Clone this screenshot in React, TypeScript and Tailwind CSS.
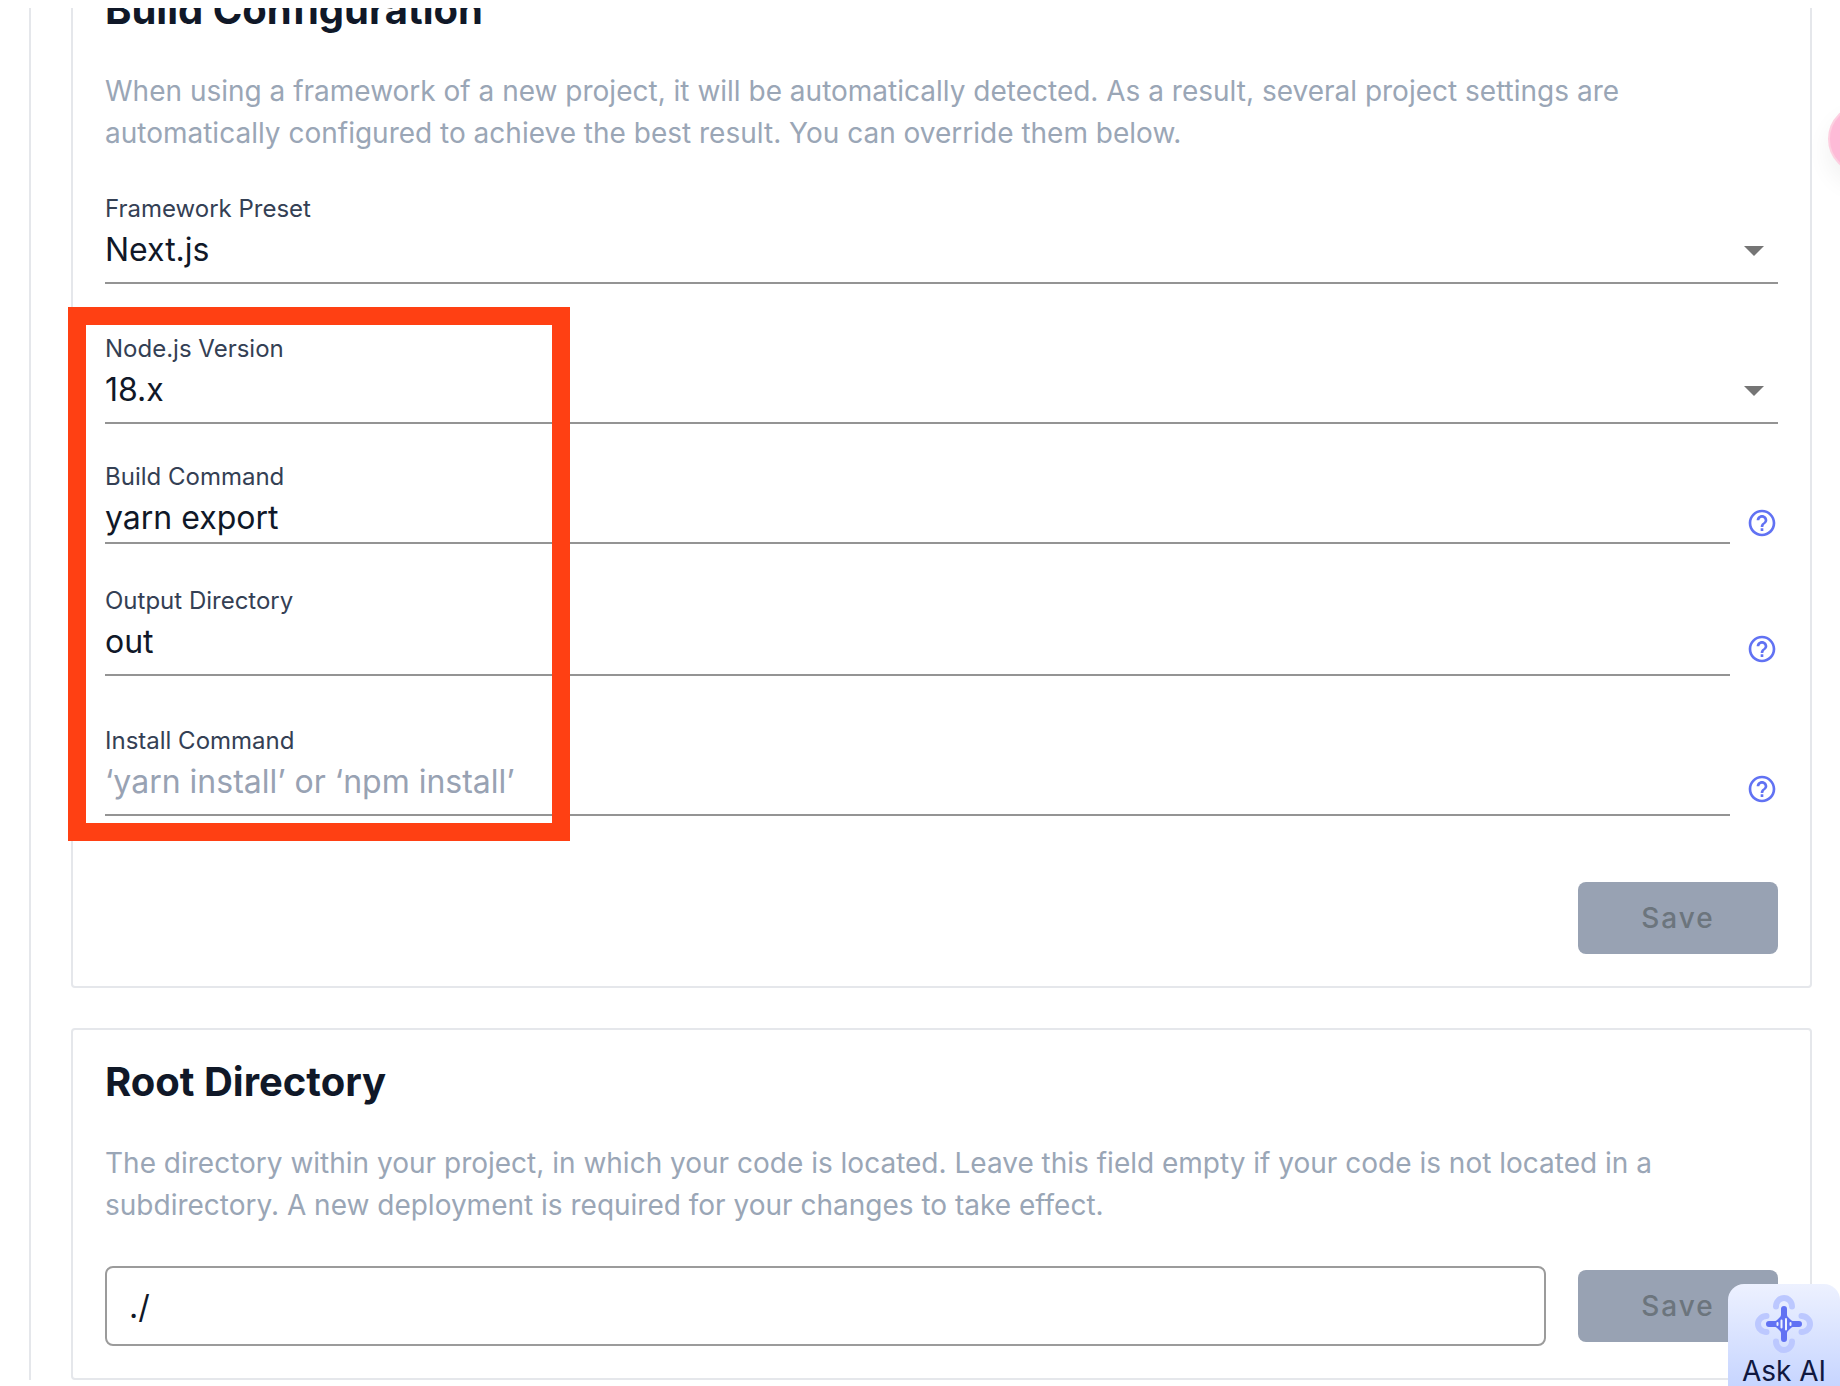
import { useId } from "react";
import type { ReactNode } from "react";
import { MdArrowDropDown, MdHelpOutline } from "react-icons/md";

const font = "font-['Inter',sans-serif]";
const labelClass = "block text-2xl leading-[34px] text-[#344054]";
const controlClass =
  "w-full appearance-none bg-transparent p-0 text-[32px] text-[#101828] outline-none placeholder:text-[#98a2b3] placeholder:opacity-100";

function Card({ title, text, children, className = "" }: { title: string; text: string; children: ReactNode; className?: string }) {
  return (
    <section className={`rounded border-2 border-[#e5e7eb] p-8 ${className}`}>
      <h2 className="text-[40px] leading-10 font-bold text-[#101828]">{title}</h2>
      <p className="mt-10 text-[28px] leading-[42px] text-[#9aa6b6]">{text}</p>
      {children}
    </section>
  );
}

function SelectField({ label, value }: { label: string; value: string }) {
  const id = useId();
  return (
    <div>
      <label htmlFor={id} className={labelClass}>{label}</label>
      <div className="relative border-b-2 border-[#949494] pb-2">
        <select id={id} defaultValue={value} className={`${controlClass} block h-12`}>
          <option>{value}</option>
        </select>
        <MdArrowDropDown className="pointer-events-none absolute top-0 right-0 size-12 text-[#757575]" />
      </div>
    </div>
  );
}

function TextField({ label, value, placeholder, dense }: { label: string; value?: string; placeholder?: string; dense?: boolean }) {
  const id = useId();
  return (
    <div className="flex items-end gap-4">
      <div className="grow">
        <label htmlFor={id} className={labelClass}>{label}</label>
        <div className={dense ? "border-b-2 border-[#949494]" : "border-b-2 border-[#949494] pb-2"}>
          <input id={id} type="text" defaultValue={value} placeholder={placeholder} className={`${controlClass} block h-12`} />
        </div>
      </div>
      <button type="button" aria-label={`Help: ${label}`} className={dense ? "mb-[5px] text-[#6172f3]" : "mb-[11px] text-[#6172f3]"}>
        <MdHelpOutline className="size-8" />
      </button>
    </div>
  );
}

function SaveButton() {
  return (
    <button type="button" disabled className="h-[72px] w-[200px] shrink-0 rounded-lg bg-[#98a2b3] text-[28px] font-medium tracking-[2px] text-[#6c757d]">
      Save
    </button>
  );
}

function AskIcon() {
  return (
    <svg viewBox="0 0 58 58" className="size-[58px] shrink-0" fill="none" aria-hidden="true">
      <g stroke="#bcc8ff" strokeWidth="6" strokeLinecap="round">
        <path d="M21 11.5a8 8.500 0 0 1 16 0" />
        <path d="M21 46.500a8 8.500 0 0 0 16 0" />
        <path d="M11.500 21a8.500 8 0 0 0 0 16" />
        <path d="M46.500 21a8.500 8 0 0 1 0 16" />
      </g>
      <path
        d="M29 11a3 3 0 0 1 3 3v5.500c0 1.200.4 2 1.200 2.800l2.500 2.500c.8.800 1.600 1.200 2.800 1.200H44a3 3 0 0 1 0 6h-5.500c-1.200 0-2 .4-2.800 1.200l-2.500 2.500c-.8.800-1.200 1.600-1.200 2.800V44a3 3 0 0 1-6 0v-5.500c0-1.200-.4-2-1.200-2.800l-2.500-2.500c-.8-.8-1.600-1.200-2.800-1.200H14a3 3 0 0 1 0-6h5.500c1.200 0 2-.4 2.800-1.200l2.500-2.500c.8-.8 1.200-1.600 1.200-2.800V14a3 3 0 0 1 3-3Z"
        fill="#6172f3"
      />
      <g stroke="#eef2ff" strokeWidth="2" strokeLinecap="round">
        <path d="M22.500 28v2M26.500 25.500v7M31 24v10.500M35.500 28v2" />
      </g>
    </svg>
  );
}

export default function App() {
  return (
    <div className={`${font} relative overflow-hidden bg-white pt-2 pb-1.5`}>
      <main className="overflow-hidden pl-[29px]">
        <div className="border-l-2 border-[#e5e7eb] pr-7 pl-10">
          <Card
            title="Build Configuration"
            text="When using a framework of a new project, it will be automatically detected. As a result, several project settings are automatically configured to achieve the best result. You can override them below."
            className="-mt-[52px]"
          >
            <form className="mt-[38px]">
              <SelectField label="Framework Preset" value="Next.js" />
              <div className="relative mt-12">
                <SelectField label="Node.js Version" value="18.x" />
                <div className="mt-9 mb-10">
                  <TextField label="Build Command" value="yarn export" dense />
                </div>
                <TextField label="Output Directory" value="out" />
                <div className="mt-12">
                  <TextField label="Install Command" placeholder="‘yarn install’ or ‘npm install’" />
                </div>
                <div className="pointer-events-none absolute -top-[25px] -bottom-[25px] -left-[37px] w-[502px] border-[18px] border-[#ff4013]" />
              </div>
              <div className="mt-[66px] flex justify-end">
                <SaveButton />
              </div>
            </form>
          </Card>
          <Card
            title="Root Directory"
            text="The directory within your project, in which your code is located. Leave this field empty if your code is not located in a subdirectory. A new deployment is required for your changes to take effect."
            className="mt-10"
          >
            <form className="mt-10 flex items-center gap-8">
              <input
                type="text"
                aria-label="Root Directory"
                defaultValue="./"
                className="h-20 min-w-0 grow rounded-lg border-2 border-[#9b9b9b] px-[22px] text-[32px] text-[#101828] outline-none"
              />
              <SaveButton />
            </form>
          </Card>
        </div>
      </main>
      <button
        type="button"
        aria-label="Open widget"
        className="absolute top-[104px] -right-[58px] size-[70px] rounded-full border-2 border-[#fdcfe0] bg-[#febad7] shadow-[0_12px_24px_rgba(0,0,0,0.06)]"
      />
      <button
        type="button"
        className="absolute right-0 bottom-0 flex h-[102px] w-28 flex-col items-center overflow-hidden rounded-t-2xl bg-linear-to-b from-[#edf1ff] to-[#c7d5ff] pt-[11px] text-[28px] leading-9 text-[#101840]"
      >
        <AskIcon />
        Ask AI
      </button>
    </div>
  );
}
